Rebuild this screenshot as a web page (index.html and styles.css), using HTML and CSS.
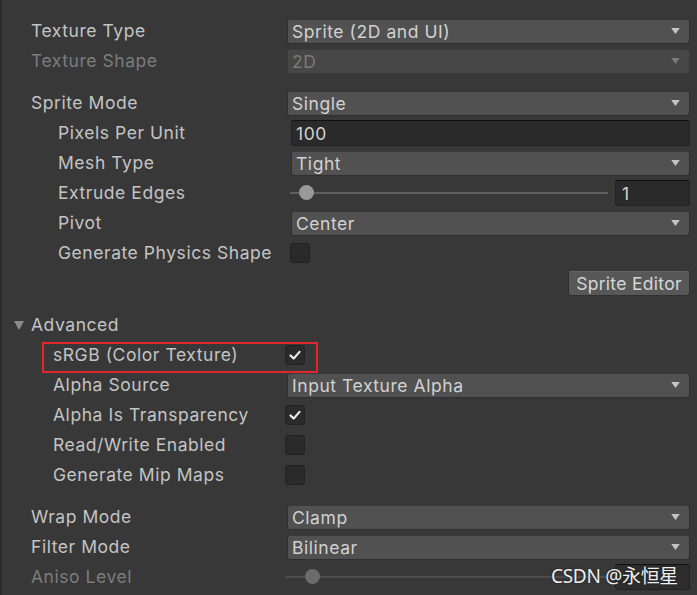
FILE: index.html
```html
<!DOCTYPE html>
<html>
<head>
<meta charset="utf-8">
<link rel="stylesheet" href="styles.css">
</head>
<body>
<div class="inspector">
  <div class="group">
    <div class="row">
      <div class="label">Texture Type</div>
      <div class="field"><div class="dropdown"><span>Sprite (2D and UI)</span><svg class="arrow" viewBox="0 0 10 7"><polygon points="0,0 10,0 5,7"/></svg></div></div>
    </div>
    <div class="row">
      <div class="label disabled">Texture Shape</div>
      <div class="field"><div class="dropdown is-disabled"><span>2D</span><svg class="arrow" viewBox="0 0 10 7"><polygon points="0,0 10,0 5,7"/></svg></div></div>
    </div>
  </div>

  <div class="group">
    <div class="row">
      <div class="label">Sprite Mode</div>
      <div class="field"><div class="dropdown"><span>Single</span><svg class="arrow" viewBox="0 0 10 7"><polygon points="0,0 10,0 5,7"/></svg></div></div>
    </div>
    <div class="row">
      <div class="label indent">Pixels Per Unit</div>
      <div class="field shift"><div class="input"><span>100</span></div></div>
    </div>
    <div class="row">
      <div class="label indent">Mesh Type</div>
      <div class="field shift"><div class="dropdown"><span>Tight</span><svg class="arrow" viewBox="0 0 10 7"><polygon points="0,0 10,0 5,7"/></svg></div></div>
    </div>
    <div class="row">
      <div class="label indent">Extrude Edges</div>
      <div class="field shift-s slider-field">
        <div class="slider"><div class="track"></div><div class="thumb" style="left: 9px"></div></div>
        <div class="input num"><span>1</span></div>
      </div>
    </div>
    <div class="row">
      <div class="label indent">Pivot</div>
      <div class="field shift"><div class="dropdown"><span>Center</span><svg class="arrow" viewBox="0 0 10 7"><polygon points="0,0 10,0 5,7"/></svg></div></div>
    </div>
    <div class="row">
      <div class="label indent">Generate Physics Shape</div>
      <div class="field shift-s"><div class="checkbox"></div></div>
    </div>
    <div class="row button-row">
      <div class="button">Sprite Editor</div>
    </div>
  </div>

  <div class="group">
    <div class="row">
      <div class="label foldout"><svg class="fold" viewBox="0 0 10 9"><polygon points="0,0 10,0 5,9"/></svg>Advanced</div>
    </div>
    <div class="row annotated">
      <div class="label sub">sRGB (Color Texture)</div>
      <div class="field back"><div class="checkbox checked"><svg viewBox="0 0 20 20"><polyline points="5,10.5 8.5,14 15,6.5"/></svg></div></div>
      <div class="highlight"></div>
    </div>
    <div class="row">
      <div class="label sub">Alpha Source</div>
      <div class="field"><div class="dropdown"><span>Input Texture Alpha</span><svg class="arrow" viewBox="0 0 10 7"><polygon points="0,0 10,0 5,7"/></svg></div></div>
    </div>
    <div class="row">
      <div class="label sub">Alpha Is Transparency</div>
      <div class="field back"><div class="checkbox checked"><svg viewBox="0 0 20 20"><polyline points="5,10.5 8.5,14 15,6.5"/></svg></div></div>
    </div>
    <div class="row">
      <div class="label sub">Read/Write Enabled</div>
      <div class="field back"><div class="checkbox"></div></div>
    </div>
    <div class="row">
      <div class="label sub">Generate Mip Maps</div>
      <div class="field back"><div class="checkbox"></div></div>
    </div>
  </div>

  <div class="group">
    <div class="row">
      <div class="label">Wrap Mode</div>
      <div class="field"><div class="dropdown"><span>Clamp</span><svg class="arrow" viewBox="0 0 10 7"><polygon points="0,0 10,0 5,7"/></svg></div></div>
    </div>
    <div class="row">
      <div class="label">Filter Mode</div>
      <div class="field"><div class="dropdown"><span>Bilinear</span><svg class="arrow" viewBox="0 0 10 7"><polygon points="0,0 10,0 5,7"/></svg></div></div>
    </div>
    <div class="row">
      <div class="label disabled">Aniso Level</div>
      <div class="field back-s slider-field">
        <div class="slider is-disabled"><div class="track"></div><div class="thumb" style="left: 20px"></div></div>
        <div class="input num is-disabled"></div>
      </div>
    </div>
  </div>
</div>
<div class="watermark">CSDN @永恒星</div>
</body>
</html>
```
FILE: styles.css
```css
html, body {
  margin: 0;
  padding: 0;
  background: #383838;
}
body {
  width: 697px;
  height: 595px;
  overflow: hidden;
  position: relative;
  font-family: Inter, "Noto Sans", sans-serif;
  font-size: 17.5px;
  letter-spacing: 0.55px;
  color: #c4c4c4;
  border-left: 2px solid #2c2c2c;
  box-sizing: border-box;
}
.inspector {
  padding: 16px 7px 0 0;
  display: flex;
  flex-direction: column;
  gap: 12px;
}
.group {
  display: flex;
  flex-direction: column;
}
.row {
  height: 30px;
  display: grid;
  grid-template-columns: 285px 1fr;
  align-items: center;
  position: relative;
}
.label {
  padding-left: 29px;
  white-space: nowrap;
  line-height: 30px;
}
.label.indent { padding-left: 56px; }
.label.sub { padding-left: 51px; }
.label.disabled { color: #7d7d7d; }
.label.foldout {
  padding-left: 12px;
  display: flex;
  align-items: center;
}
.fold {
  width: 10px;
  height: 9px;
  fill: #8c8c8c;
  margin-right: 7px;
}
.field {
  display: flex;
  align-items: center;
}
.field.shift { margin-left: 4px; }
.field.shift-s { margin-left: 3px; }
.field.back { margin-left: -2px; }
.field.back-s { margin-left: -2px; }
.dropdown {
  flex: 1;
  height: 25px;
  box-sizing: border-box;
  background: #515151;
  border: 1px solid #2f2f2f;
  border-top-color: #3a3a3a;
  border-radius: 3px;
  display: flex;
  align-items: center;
  justify-content: space-between;
  padding: 0 9px 0 4px;
  color: #d2d2d2;
}
.dropdown span { line-height: 23px; }
.arrow {
  width: 9px;
  height: 6px;
  fill: #c4c4c4;
}
.dropdown.is-disabled {
  background: #474747;
  border-color: #3c3c3c;
  color: #7a7a7a;
}
.dropdown.is-disabled .arrow { fill: #7a7a7a; }
.input {
  flex: 1;
  height: 26px;
  box-sizing: border-box;
  background: #2a2a2a;
  border: 1px solid #222222;
  border-top-color: #111111;
  border-radius: 3px;
  display: flex;
  align-items: center;
  padding-left: 4px;
  color: #d2d2d2;
}
.slider-field { gap: 7px; }
.slider {
  flex: 1;
  height: 26px;
  position: relative;
}
.track {
  position: absolute;
  left: 0;
  right: 0;
  top: 12px;
  height: 2px;
  background: #5e5e5e;
}
.thumb {
  position: absolute;
  top: 5px;
  width: 15px;
  height: 15px;
  border-radius: 50%;
  background: #999999;
}
.slider.is-disabled .track { background: #4d4d4d; }
.slider.is-disabled .thumb { background: #6b6b6b; }
.input.num {
  flex: 0 0 75px;
  padding-left: 6px;
}
.input.num.is-disabled { color: #7a7a7a; background: #2d2d2d; }
.checkbox {
  width: 20px;
  height: 20px;
  box-sizing: border-box;
  background: #2a2a2a;
  border: 1px solid #222222;
  border-radius: 3px;
  display: flex;
  align-items: center;
  justify-content: center;
}
.checkbox svg {
  width: 20px;
  height: 20px;
  fill: none;
  stroke: #eeeeee;
  stroke-width: 2.4;
  stroke-linecap: round;
  stroke-linejoin: round;
}
.button-row {
  display: flex;
  justify-content: flex-end;
}
.button {
  width: 122px;
  height: 25px;
  box-sizing: border-box;
  background: #585858;
  border: 1px solid #303030;
  border-top-color: #646464;
  border-radius: 3px;
  display: flex;
  align-items: center;
  justify-content: center;
  color: #d6d6d6;
  letter-spacing: 0.3px;
}
.highlight {
  position: absolute;
  left: 40px;
  top: 2px;
  width: 276px;
  height: 31px;
  box-sizing: border-box;
  border: 2px solid #e3262c;
  pointer-events: none;
}
.watermark {
  position: absolute;
  left: 549px;
  top: 561px;
  font-family: "Noto Sans", "Noto Sans CJK SC", sans-serif;
  font-size: 19px;
  color: #efefef;
  white-space: nowrap;
  text-shadow: 0 0 2px #222, 0 0 1px #222;
  letter-spacing: -0.3px;
}
```
